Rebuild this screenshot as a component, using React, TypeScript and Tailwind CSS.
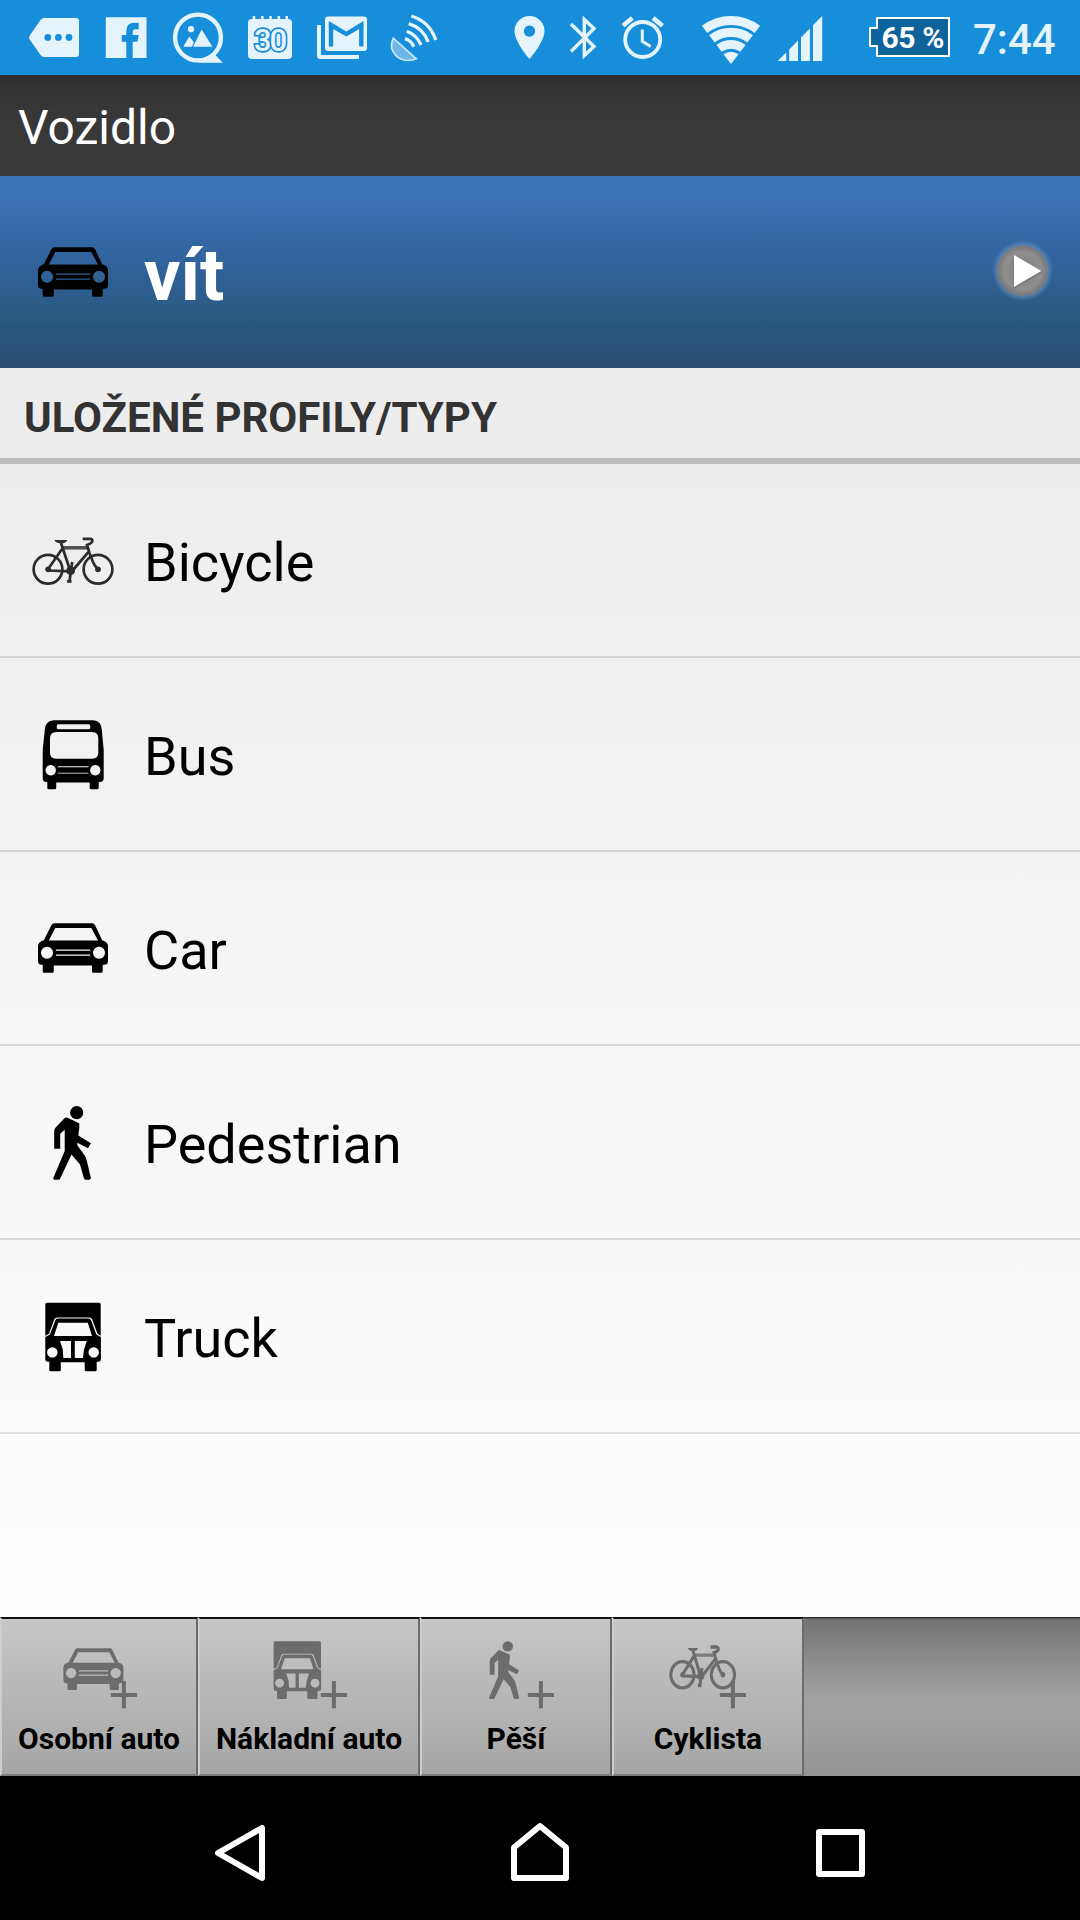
import clsx from 'clsx'
import React from 'react'

interface IconProps {
  className?: string
  children?: React.ReactNode
}

type GlyphName = 'bicycle' | 'bus' | 'car' | 'pedestrian' | 'truck'

const CarGlyph = (): React.ReactNode => (
  <path
    fillRule="evenodd"
    d="M30.5 23.3H68.2Q70 23.3 71 25L78 40Q84 42 84 46V61.5Q84 64 81.5 64.5L78.7 65V71.2Q78.7 72.7 77.2 72.7H69.5Q68 72.7 68 71.2V65.5H29.8V71.2Q29.8 72.7 28.3 72.7H20.2Q18.7 72.7 18.7 71.2V65L16.5 64.5Q14 64 14 61.5V46Q14 42 20 40L27.5 25Q28.5 23.3 30.5 23.3zM31.3 28L24.8 40.5H74L67.3 28zM23 46.7a6 6 0 1 0 .01 0zM75 46.7a6 6 0 1 0 .01 0zM32 49.4H66.3V50.7H32zM32 54.5H66.3V55.8H32z"
  />
)

const BusGlyph = (): React.ReactNode => (
  <path
    fillRule="evenodd"
    d="M30 14.3H69Q77.5 15 77.8 24L79.7 44V72Q79.7 76 76 76H74.7V81.8Q74.7 83.3 73.2 83.3H67.2Q65.7 83.3 65.7 81.8V76.5H32.2V81.8Q32.2 83.3 30.7 83.3H24.8Q23.3 83.3 23.3 81.8V76H22Q18.7 76 18.7 72V44L20.8 24Q21 15 30 14.3zM34 18.2Q32.7 18.2 32.7 20.7T34 23.2H65Q66.3 23.2 66.3 20.7T65 18.2zM32.5 26Q26 26 26 32V47Q26 52.7 32 52.7H68Q74.3 52.7 74.3 47V32Q74.3 26 68 26zM26.7 59.1a5.2 5.2 0 1 0 .01 0zM71.3 59.1a5.2 5.2 0 1 0 .01 0zM33.7 60.3H64.5V61.2H33.7zM33.7 66.7H64.5V67.6H33.7z"
  />
)

const PedestrianGlyph = (): React.ReactNode => (
  <>
    <circle cx="52.7" cy="18.7" r="6.6" />
    <path d="M42.7 23.5L50 26.7 55.3 29.5V34L54.3 41.5 66.9 49.3 64 54.3 53.3 48.8V51.3L61 62Q62.3 64 63 67.5L67 84.5 65.5 85.7H61L60 84.5 56 70.5 47.5 60.5 36 85Q35.5 85.7 34.5 85.7H30.5Q29 85.7 29.3 84L40.7 57V35.8L36.2 39.8V54.7H30.2V37.5Q30.2 35.5 31.2 34L40.5 24.2Q41.5 23.2 42.7 23.5z" />
  </>
)

const TruckGlyph = (): React.ReactNode => (
  <path
    fillRule="evenodd"
    d="M23 14.7H75Q76.7 14.7 76.7 16.4V47.7L73.5 45.8 68.2 31.5Q67.5 29.4 65 29.4H33.3Q31 29.4 30.2 31.5L25 45.8 21.3 47.7V16.4Q21.3 14.7 23 14.7zM34 30.4H64.2Q66.4 30.4 67.2 32.5L72.3 46.5 76.9 49V71Q76.9 73.8 74 73.8H72.7V81.8Q72.7 83.3 71.2 83.3H62.2Q60.7 83.3 60.7 81.8V74.2H36.8V81.8Q36.8 83.3 35.3 83.3H26.8Q25.3 83.3 25.3 81.8V73.8H24Q21.3 73.8 21.3 71V49L25.9 46.5 31.2 32.5Q31.9 30.4 34 30.4zM34.3 34.7L30 48H68L63.8 34.7zM36 53L38.8 61.5 39.3 70H47V53zM50.8 53V70H58.9L60 61.5 62.8 53zM28.3 59.2a5.2 5.2 0 1 0 .01 0zM69.7 59.2a5.2 5.2 0 1 0 .01 0z"
  />
)

// Line weight is inherited, the small toolbar variant needs heavier strokes.
const BicycleGlyph = (): React.ReactNode => (
  <>
    <g fill="none" stroke="currentColor">
      <circle cx="24" cy="57.3" r="14.4" />
      <circle cx="74" cy="57.3" r="14.4" />
      <path d="M24 57.3L38 37M24 58.5L46 59.3M37 31L46 58M49 58L64.5 40M45.5 69.3L48.2 50M43 69.3H47.5" />
      <path d="M58.7 26.8H66.5Q68.7 27.2 68.3 29.4 67.5 31.6 63 33L65.5 41 69 50Q71 54.5 74 57.3" />
      <path strokeWidth="3.6" strokeOpacity=".8" d="M38.7 35.8H64" />
    </g>
    <path d="M30.3 28H43.3Q42.5 30.5 39.5 31.3H35Q31.5 30.8 30.3 28z" />
    <circle cx="46.6" cy="58.7" r="4.4" />
    <circle cx="24.2" cy="57.3" r="2.9" />
    <circle cx="74" cy="57.3" r="2.9" />
  </>
)

const glyphs: Record<GlyphName, () => React.ReactNode> = {
  bicycle: BicycleGlyph,
  bus: BusGlyph,
  car: CarGlyph,
  pedestrian: PedestrianGlyph,
  truck: TruckGlyph,
}

const VehicleIcon = ({ name, className }: { name: GlyphName; className?: string }): React.ReactNode => {
  const Glyph = glyphs[name]
  return (
    <svg className={clsx('size-24 shrink-0 fill-current', className)} viewBox="0 0 96 96" strokeWidth="2.7">
      <Glyph />
    </svg>
  )
}

// Status icons share one coordinate system: each svg is a full height slice of the bar.
const StatusIcon = ({ from, to, children }: { from: number; to: number; children: React.ReactNode }): React.ReactNode => (
  <svg className="shrink-0" width={to - from} height="75" viewBox={`${from} 0 ${to - from} 75`} fill="#e5f4fc">
    {children}
  </svg>
)

const StatusBar = (): React.ReactNode => (
  <header className="flex h-[75px] items-start justify-between bg-[#168eda] text-[#e5f4fc]">
    <div className="flex">
      <StatusIcon from={0} to={92}>
        <path d="M44.5 18H76a3 3 0 0 1 3 3V54a3 3 0 0 1-3 3H44.5Q42 57 40.5 55L29.7 39.5Q28.5 37.5 29.7 35.5L40.5 20Q42 18 44.5 18z" />
        <g fill="#168eda">
          <circle cx="47.8" cy="37.4" r="3.4" />
          <circle cx="58.4" cy="37.4" r="3.4" />
          <circle cx="69" cy="37.4" r="3.4" />
        </g>
      </StatusIcon>
      <StatusIcon from={92} to={160}>
        <path d="M105.8 17.3H146.5V58H132.7V41.7H137.5L138.7 35H132.7V32Q132.7 29.3 135.5 29.3H138.7V22.7H134.5Q126.3 22.7 126.3 31V35H121.7V41.7H126.3V58H105.8z" />
      </StatusIcon>
      <StatusIcon from={160} to={236}>
        <circle cx="198" cy="37.5" r="22.9" fill="none" stroke="#e5f4fc" strokeWidth="4.4" />
        <path d="M198 62.7H222.8L215 54.8 211 57z" />
        <circle cx="191" cy="29.2" r="3.1" />
        <path d="M183.3 46.8L189.3 36.5 194 42.5 191.8 46.8zM193.2 46.8L201.6 29.6 212.4 46.8z" />
      </StatusIcon>
      <StatusIcon from={236} to={304}>
        <rect x="248" y="19" width="44" height="40" rx="4" />
        <path d="M254 16V21M262.3 16V21M270.5 16V21M278.8 16V21M286.7 16V21" stroke="#e5f4fc" strokeWidth="2.6" />
        <text
          x="254"
          y="50.5"
          fontFamily="Roboto, sans-serif"
          fontSize="31"
          fontWeight="500"
          textLength="33"
          stroke="#168eda"
          strokeWidth="3.4"
          paintOrder="stroke"
        >
          30
        </text>
      </StatusIcon>
      <StatusIcon from={304} to={380}>
        <path d="M319 25V55.5Q319 57 320.5 57H359" fill="none" stroke="#e5f4fc" strokeWidth="4" />
        <rect x="325" y="16.5" width="42" height="34.5" rx="3" />
        <path d="M331 46.5V24.5M361.3 24.5V46.5" fill="none" stroke="#168eda" strokeWidth="4.4" />
        <path d="M328.8 21L346.3 31.5 363.5 21V26.5L346.3 36.5 328.8 26.5z" fill="#168eda" />
      </StatusIcon>
      <StatusIcon from={380} to={450}>
        <path
          d="M393.3 38.2L416.3 58.8Q409 62 401.5 59.3 394 56 391.8 48.5 390.8 43.5 393.3 38.2z"
          fill="#6db6e8"
          stroke="#cbe8f9"
          strokeWidth="1.6"
        />
        <g fill="none" stroke="#e5f4fc" strokeWidth="3.3">
          <path d="M405 38.7Q411 40.5 413.8 46.7" />
          <path d="M406.7 31.2Q416.5 34.5 421 45" />
          <path d="M408.7 23.7Q423 28 428.2 42" />
          <path d="M411.3 16Q429.5 21.5 435.8 40" />
        </g>
      </StatusIcon>
    </div>
    <div className="flex">
      <StatusIcon from={506} to={556}>
        <path
          fillRule="evenodd"
          d="M529.5 16a15 15 0 0 1 15 15C544.5 42 529.5 59 529.5 59S514.5 42 514.5 31a15 15 0 0 1 15-15zM529.5 25.5a5.6 5.6 0 1 0 .01 0z"
        />
      </StatusIcon>
      <StatusIcon from={556} to={610}>
        <path d="M571 24L594 46.5 584.3 55.5V19.5L594 28.5 571 51.5" fill="none" stroke="#e5f4fc" strokeWidth="3.4" />
      </StatusIcon>
      <StatusIcon from={610} to={690}>
        <g fill="none" stroke="#e5f4fc">
          <circle cx="642.7" cy="39.5" r="17.5" strokeWidth="3.8" />
          <path strokeWidth="3" d="M642.3 29.5V41.3L650.7 46.5" />
          <path strokeWidth="4.6" d="M623 25.8L632.3 18M662.4 25.8L653.1 18" />
        </g>
      </StatusIcon>
      <StatusIcon from={690} to={768}>
        <g fill="none" stroke="#e5f4fc">
          <path strokeWidth="9" d="M704.6 29.4A43.5 43.5 0 0 1 757.4 29.4" />
          <path strokeWidth="9.3" d="M711.9 38.9A31.6 31.6 0 0 1 750.1 38.9" />
          <path strokeWidth="8.7" d="M719.1 48.4A19.6 19.6 0 0 1 742.9 48.4" />
        </g>
        <path d="M731 64L723.5 54.2A12.3 12.3 0 0 1 738.5 54.2z" />
      </StatusIcon>
      <StatusIcon from={768} to={860}>
        <path d="M777.7 61L786.2 52.4V61zM789.2 61V49.4L798 40.5V61zM801 61V37.4L809.9 28.5V61zM813 61V25.3L822.2 16V61z" />
      </StatusIcon>
      <StatusIcon from={860} to={973}>
        <path d="M877 18H949V56H877V46H870V28H877z" fill="#0f639b" stroke="#fff" strokeWidth="2" strokeLinejoin="round" />
        <text x="881.5" y="47.7" fill="#fff" fontFamily="Roboto, sans-serif" fontSize="30" fontWeight="700" textLength="63">
          65 %
        </text>
      </StatusIcon>
      <span className="w-[107px] pt-[15px] text-[42px] leading-[50px] font-medium">7:44</span>
    </div>
  </header>
)

const PlayIcon = (): React.ReactNode => (
  <svg className="size-24" viewBox="0 0 96 96">
    <defs>
      <radialGradient id="glow">
        <stop offset=".76" stopColor="#7d9cbd" stopOpacity=".8" />
        <stop offset="1" stopColor="#5b87b8" stopOpacity="0" />
      </radialGradient>
      <radialGradient id="disc">
        <stop offset="0" stopColor="#7d7d7d" />
        <stop offset=".75" stopColor="#8f8f8f" />
        <stop offset="1" stopColor="#777" />
      </radialGradient>
    </defs>
    <circle cx="47.7" cy="46.7" r="31" fill="url(#glow)" />
    <circle cx="47.7" cy="46.7" r="25" fill="url(#disc)" />
    <path d="M38.5 33V65L68 48z" fill="#444" fillOpacity=".3" />
    <path d="M39 31L66.3 47 39 63z" fill="#fff" />
  </svg>
)

const CurrentProfile = (): React.ReactNode => (
  <section className="flex h-48 items-center bg-[linear-gradient(#3b76b6_0%,#3b73b5_7%,#30629a_48%,#2b5a82_72%,#284b6e_100%)] pr-[9px] pl-6 text-white">
    <VehicleIcon name="car" className="text-black" />
    <span className="grow pt-[7px] pl-6 text-[72px] leading-[84px] font-bold">vít</span>
    <PlayIcon />
  </section>
)

const profiles: { name: string; icon: GlyphName }[] = [
  { name: 'Bicycle', icon: 'bicycle' },
  { name: 'Bus', icon: 'bus' },
  { name: 'Car', icon: 'car' },
  { name: 'Pedestrian', icon: 'pedestrian' },
  { name: 'Truck', icon: 'truck' },
]

const ProfileList = (): React.ReactNode => (
  <section className="grow bg-linear-to-b from-[#ececec] to-[#fefefe]">
    <h2 className="h-24 border-b-6 border-[#bdbdbd] pt-[25px] pl-6 text-[42px] leading-[50px] font-bold text-[#333]">
      ULOŽENÉ PROFILY/TYPY
    </h2>
    <ul>
      {profiles.map(({ name, icon }) => (
        <li key={name} className="flex h-[194px] items-center border-b-2 border-black/12 pl-6 text-black">
          <VehicleIcon name={icon} className={clsx(icon === 'bicycle' && 'text-[#2c2c2c]')} />
          <span className="pt-[5px] pl-6 text-[54px] leading-[64px]">{name}</span>
        </li>
      ))}
    </ul>
  </section>
)

const actions: { label: string; icon: GlyphName; width: string; transform: string }[] = [
  { label: 'Osobní auto', icon: 'car', width: 'w-[198px]', transform: 'translate(1.4 4.6) scale(.857 .844)' },
  { label: 'Nákladní auto', icon: 'truck', width: 'w-[222px]', transform: 'translate(-4.6 5) scale(.855 .84)' },
  { label: 'Pěší', icon: 'pedestrian', width: 'w-48', transform: 'translate(-1.4 7.7) scale(.8 .785)' },
  { label: 'Cyklista', icon: 'bicycle', width: 'w-48', transform: 'translate(4 -1.4) scale(.81 .91)' },
]

const AddIcon = ({ icon, transform }: { icon: GlyphName; transform: string }): React.ReactNode => {
  const Glyph = glyphs[icon]
  return (
    <svg className="mr-[2px] size-24 fill-current text-[#6c6c6c]" viewBox="0 0 96 96">
      <g transform={transform} strokeWidth="3.6">
        <Glyph />
      </g>
      <path d="M60.8 71H87M73.9 57V84.3" stroke="currentColor" strokeWidth="4" />
    </svg>
  )
}

const ActionBar = (): React.ReactNode => (
  <footer className="flex h-[159px] bg-[linear-gradient(#2e2e2e_0,#2e2e2e_1px,#747474_2px,#a1a1a1_50%,#a1a1a1_65%,#949494_100%)]">
    {actions.map(({ label, icon, width, transform }) => (
      <button
        key={label}
        className={clsx(
          'flex flex-col items-center border-2 border-t-[#101010] border-r-[#6b6b6b] border-b-[#7e7e7e] border-l-[#cecece] bg-linear-to-b from-[#c7c7c7] to-[#a6a6a6] pt-[5px]',
          width,
        )}
      >
        <AddIcon icon={icon} transform={transform} />
        <span className="mt-px text-[30px] leading-9 font-bold whitespace-nowrap text-black">{label}</span>
      </button>
    ))}
  </footer>
)

const NavIcon = ({ children }: IconProps): React.ReactNode => (
  <div className="flex w-[300px] justify-center">
    <svg className="size-[72px]" viewBox="0 0 72 72" fill="none" stroke="#fff" strokeWidth="6" strokeLinejoin="round">
      {children}
    </svg>
  </div>
)

const NavigationBar = (): React.ReactNode => (
  <nav className="flex h-36 items-center justify-center bg-black">
    <NavIcon>
      <path d="M14 41L58 16V66z" />
    </NavIcon>
    <NavIcon>
      <path d="M36 14L62 35.5V66H10V35.5z" />
    </NavIcon>
    <NavIcon>
      <path d="M15 20H58V62H15z" />
    </NavIcon>
  </nav>
)

const App = (): React.ReactNode => (
  <div className="flex h-[1920px] w-[1080px] flex-col overflow-hidden font-[Roboto,sans-serif]">
    <StatusBar />
    <h1 className="h-[101px] bg-[linear-gradient(#2b2b2b_0,#333_12px,#383838_45px)] pt-[25px] pl-[18px] text-[48px] leading-[56px] text-white">
      Vozidlo
    </h1>
    <CurrentProfile />
    <ProfileList />
    <ActionBar />
    <NavigationBar />
  </div>
)

export default App
